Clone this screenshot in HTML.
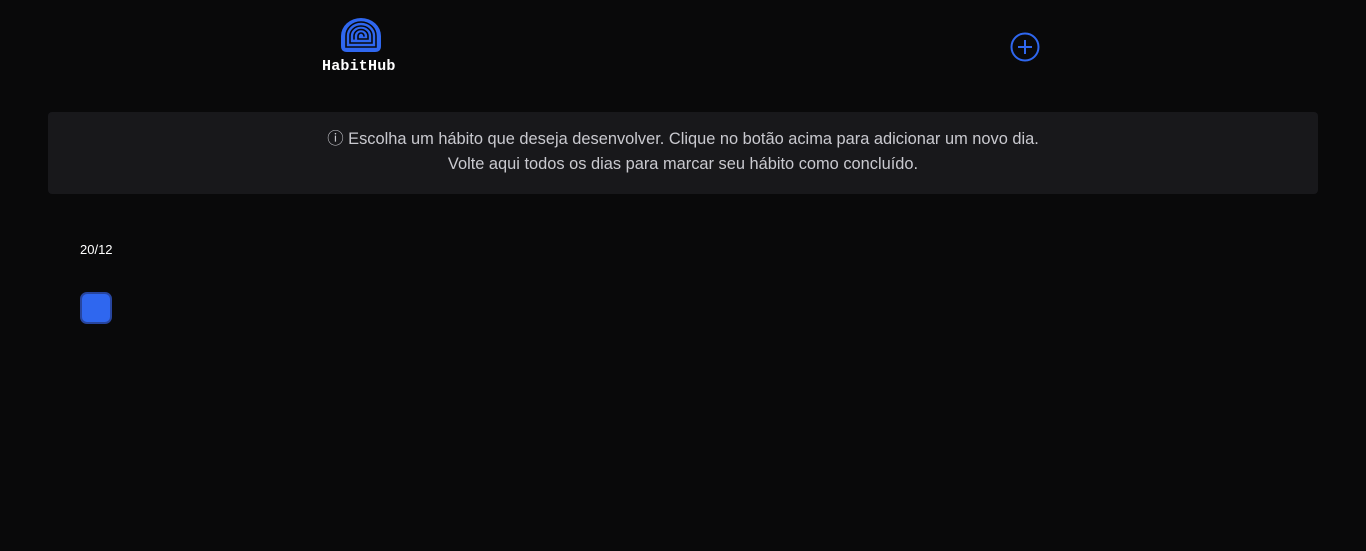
<!DOCTYPE html>
<html><head><meta charset="utf-8"><style>
html,body{margin:0;padding:0;background:#09090a;width:1366px;height:551px;overflow:hidden;font-family:"Liberation Sans",sans-serif}
.logo{position:absolute;left:341px;top:16px}
.brand{position:absolute;left:322px;top:58px;font-family:"Liberation Mono",monospace;font-weight:bold;font-size:15px;color:#fff;letter-spacing:0.2px}
.plus{position:absolute;left:1010px;top:32px}
.box{position:absolute;left:48px;top:112px;width:1270px;height:82px;background:#18181b;border-radius:4px;color:#c9c9cf;font-size:16.4px;text-align:center;line-height:25px;padding-top:15px;box-sizing:border-box}
.date{position:absolute;left:80px;top:242px;color:#fff;font-size:13px}
.sq{position:absolute;left:80px;top:292px;width:28px;height:28px;background:#2f67ef;border:2px solid #27459e;border-radius:7px}
</style></head><body>
<svg class="logo" width="40" height="36" viewBox="0 0 40 36">
<path d="M0 30 L0 20 A20 18 0 0 1 40 20 L40 30 Q40 36 34 36 L6 36 Q0 36 0 30 Z" fill="#2f67ef"/>
<g fill="none" stroke="#09090a" stroke-width="1.6" stroke-linecap="round">
<path d="M5 31 V20 A15 14 0 0 1 35 20 V31 Z"/>
<path d="M9 27 V20 A11 10 0 0 1 31 20 V27 Z"/>
<path d="M13 23 V20 A7 6.5 0 0 1 27 20 V23 H17 V20 A3 3 0 0 1 23 20"/>
</g></svg>
<div class="brand">HabitHub</div>
<svg class="plus" width="30" height="30" viewBox="0 0 30 30" fill="none" stroke="#2f67ef" stroke-width="2">
<circle cx="15" cy="15" r="13.5"/><path d="M15 8v14M8 15h14"/></svg>
<div class="box">ⓘ Escolha um hábito que deseja desenvolver. Clique no botão acima para adicionar um novo dia.<br>Volte aqui todos os dias para marcar seu hábito como concluído.</div>
<div class="date">20/12</div>
<div class="sq"></div>
</body></html>
